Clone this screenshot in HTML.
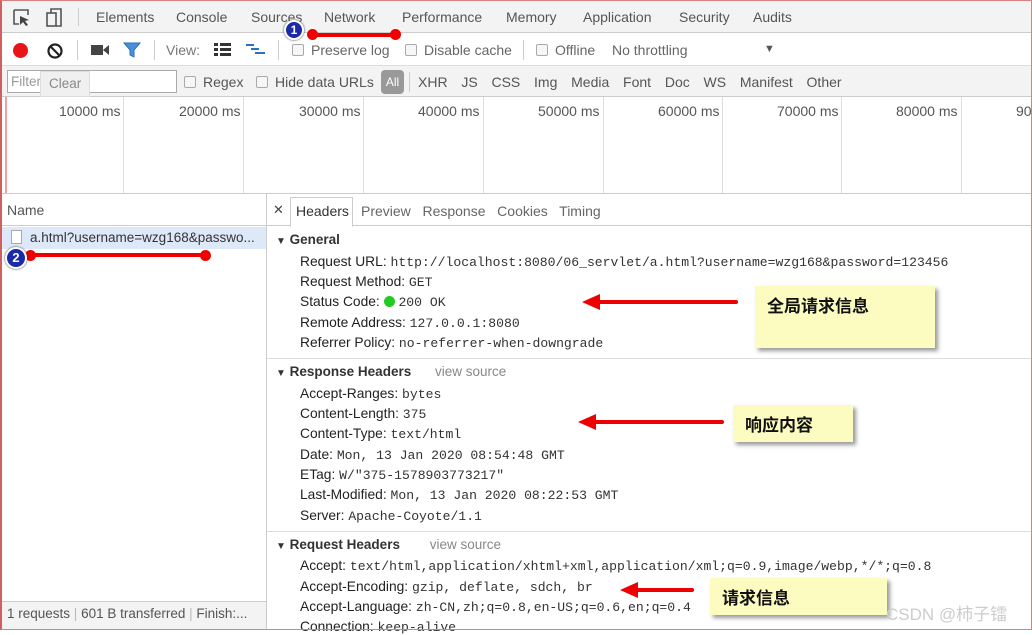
<!DOCTYPE html>
<html><head><meta charset="utf-8"><style>
*{margin:0;padding:0;box-sizing:border-box}
body{width:1032px;height:630px;overflow:hidden;position:relative;background:#fff;font-family:"Liberation Sans","Noto Sans CJK SC",sans-serif;font-size:14px;color:#333}
.a{position:absolute;white-space:nowrap}
.g{color:#555}
.mono{font-family:"Liberation Mono",monospace;font-size:13.1px;color:#333}
.cb{display:inline-block;width:12px;height:12px;border:1px solid #aaa;border-radius:2px;background:#f6f6f6;vertical-align:-1px;margin-right:7px}
.vl{position:absolute;width:1px;background:#ccc}
.note{position:absolute;background:#fdfcc0;box-shadow:3px 3px 4px #999;font-size:17px;font-weight:bold;color:#111;padding:6px 12px;font-family:"Noto Sans CJK SC",sans-serif}
.arrow{position:absolute;height:4px;background:#e00;border-radius:2px}
.arrow:before{content:"";position:absolute;left:-16px;top:-6px;border-right:18px solid #e00;border-top:8px solid transparent;border-bottom:8px solid transparent}
.row{position:absolute;left:300px;font-size:13.8px;white-space:nowrap}
.row b{font-weight:normal;color:#222}
</style></head><body>
<div class="a" style="left:0;top:0;width:1032px;height:33px;background:#f3f3f3;border-bottom:1px solid #ccc"></div>
<div class="a" style="left:0;top:33px;width:1032px;height:33px;background:#fff;border-bottom:1px solid #ddd"></div>
<div class="a" style="left:0;top:66px;width:1032px;height:31px;background:#f3f3f3;border-bottom:1px solid #ccc"></div>
<svg class="a" style="left:12px;top:8px" width="58" height="20"><path d="M2 2h14v5M2 2v14h5" fill="none" stroke="#555" stroke-width="1.6"/><path d="M8 8l9 4-4 1 3 4-2 1-3-4-3 3z" fill="#444"/><rect x="35" y="5" width="9" height="13" fill="none" stroke="#555" stroke-width="1.6"/><path d="M39 5V1h10v17h-5" fill="none" stroke="#555" stroke-width="1.6"/></svg>
<div class="vl" style="left:78px;top:8px;height:18px"></div>
<div class="a g" style="left:96px;top:9px">Elements</div>
<div class="a g" style="left:176px;top:9px">Console</div>
<div class="a g" style="left:251px;top:9px">Sources</div>
<div class="a g" style="left:324px;top:9px">Network</div>
<div class="a g" style="left:402px;top:9px">Performance</div>
<div class="a g" style="left:506px;top:9px">Memory</div>
<div class="a g" style="left:583px;top:9px">Application</div>
<div class="a g" style="left:679px;top:9px">Security</div>
<div class="a g" style="left:753px;top:9px">Audits</div>
<div class="a" style="left:13px;top:43px;width:15px;height:15px;border-radius:50%;background:#e8141a"></div>
<svg class="a" style="left:46px;top:42px" width="18" height="18"><circle cx="9" cy="9" r="6.5" fill="none" stroke="#222" stroke-width="2.2"/><path d="M4.5 4.5l9 9" stroke="#222" stroke-width="2.2"/></svg>
<div class="vl" style="left:77px;top:40px;height:20px"></div>
<svg class="a" style="left:91px;top:44px" width="18" height="12"><rect x="0" y="1" width="12" height="10" fill="#444"/><path d="M12 6l6-5v10z" fill="#444"/></svg>
<svg class="a" style="left:123px;top:42px" width="18" height="16"><path d="M1 1h16l-6 7v7l-4-2V8z" fill="#4a90d9" stroke="#2a6fc0"/></svg>
<div class="vl" style="left:154px;top:40px;height:20px"></div>
<div class="a g" style="left:166px;top:42px;color:#777">View:</div>
<svg class="a" style="left:214px;top:43px" width="18" height="13"><rect x="0" y="0" width="4" height="3" fill="#333"/><rect x="6" y="0" width="11" height="3" fill="#333"/><rect x="0" y="5" width="4" height="3" fill="#333"/><rect x="6" y="5" width="11" height="3" fill="#333"/><rect x="0" y="10" width="4" height="3" fill="#333"/><rect x="6" y="10" width="11" height="3" fill="#333"/></svg>
<svg class="a" style="left:246px;top:44px" width="20" height="12"><rect x="0" y="0" width="8" height="2" fill="#2a70c8"/><rect x="5" y="4" width="8" height="2" fill="#2a70c8"/><rect x="9" y="8" width="10" height="2" fill="#2a70c8"/></svg>
<div class="vl" style="left:278px;top:40px;height:20px"></div>
<div class="a g" style="left:292px;top:42px;color:#666"><span class="cb"></span>Preserve log</div>
<div class="a g" style="left:405px;top:42px;color:#666"><span class="cb"></span>Disable cache</div>
<div class="vl" style="left:523px;top:40px;height:20px"></div>
<div class="a g" style="left:536px;top:42px;color:#666"><span class="cb"></span>Offline</div>
<div class="a g" style="left:612px;top:42px;color:#666">No throttling</div>
<div class="a" style="left:764px;top:43px;font-size:11px;color:#555">▼</div>
<div class="a" style="left:7px;top:70px;width:170px;height:23px;border:1px solid #aaa;background:#fff"></div>
<div class="a" style="left:11px;top:74px;color:#999;font-size:13.5px">Filter</div>
<div class="a" style="left:40px;top:71px;width:50px;height:26px;background:#f0f0f0;border:1px solid #ddd;color:#888;padding:4px 8px;font-size:13.5px">Clear</div>
<div class="a g" style="left:184px;top:74px"><span class="cb"></span>Regex</div>
<div class="a g" style="left:256px;top:74px"><span class="cb"></span>Hide data URLs</div>
<div class="a" style="left:381px;top:70px;width:23px;height:24px;background:#999;border-radius:4px;color:#fff;font-size:12px;text-align:center;line-height:24px">All</div>
<div class="vl" style="left:409px;top:72px;height:20px"></div>
<div class="a g" style="left:418px;top:74px;word-spacing:3px">XHR&nbsp; JS&nbsp; CSS&nbsp; Img&nbsp; Media&nbsp; Font&nbsp; Doc&nbsp; WS&nbsp; Manifest&nbsp; Other</div>
<div class="vl" style="left:123px;top:97px;height:96px;background:#ddd"></div>
<div class="vl" style="left:243px;top:97px;height:96px;background:#ddd"></div>
<div class="vl" style="left:363px;top:97px;height:96px;background:#ddd"></div>
<div class="vl" style="left:483px;top:97px;height:96px;background:#ddd"></div>
<div class="vl" style="left:603px;top:97px;height:96px;background:#ddd"></div>
<div class="vl" style="left:722px;top:97px;height:96px;background:#ddd"></div>
<div class="vl" style="left:841px;top:97px;height:96px;background:#ddd"></div>
<div class="vl" style="left:961px;top:97px;height:96px;background:#ddd"></div>
<div class="a" style="left:5px;top:97px;width:2px;height:96px;background:#f0a0a0"></div>
<div class="a g" style="left:59px;top:103px">10000 ms</div>
<div class="a g" style="left:179px;top:103px">20000 ms</div>
<div class="a g" style="left:299px;top:103px">30000 ms</div>
<div class="a g" style="left:418px;top:103px">40000 ms</div>
<div class="a g" style="left:538px;top:103px">50000 ms</div>
<div class="a g" style="left:658px;top:103px">60000 ms</div>
<div class="a g" style="left:777px;top:103px">70000 ms</div>
<div class="a g" style="left:896px;top:103px">80000 ms</div>
<div class="a g" style="left:1016px;top:103px">90</div>
<div class="a" style="left:0;top:193px;width:1032px;height:1px;background:#ccc"></div>
<div class="a" style="left:266px;top:194px;width:1px;height:436px;background:#ccc"></div>
<div class="a" style="left:0;top:194px;width:266px;height:32px;border-bottom:1px solid #ccc"></div>
<div class="a g" style="left:7px;top:202px">Name</div>
<div class="a" style="left:0;top:227px;width:266px;height:22px;background:#dde9f8"></div>
<div class="a" style="left:11px;top:230px;width:11px;height:14px;border:1px solid #aaa;background:#fff"></div>
<div class="a" style="left:30px;top:230px;font-size:13.5px;color:#333">a.html?username=wzg168&amp;passwo...</div>
<div class="a" style="left:0;top:601px;width:266px;height:29px;background:#f3f3f3;border-top:1px solid #ccc"></div>
<div class="a g" style="left:7px;top:606px;font-size:13.5px">1 requests <span style="color:#bbb">|</span> 601 B transferred <span style="color:#bbb">|</span> Finish:...</div>
<div class="a" style="left:267px;top:194px;width:765px;height:32px;border-bottom:1px solid #ccc"></div>
<div class="a" style="left:273px;top:202px;font-size:13px;color:#444">✕</div>
<div class="a" style="left:290px;top:197px;width:63px;height:30px;border:1px solid #ccc;border-bottom:1px solid #fff;background:#fff"></div>
<div class="a" style="left:296px;top:203px;color:#333">Headers</div>
<div class="a g" style="left:361px;top:203px;color:#666">Preview&nbsp;&nbsp; Response&nbsp;&nbsp; Cookies&nbsp;&nbsp; Timing</div>
<div class="a" style="left:276px;top:232px;font-weight:bold;font-size:13.5px;color:#333"><span style="font-size:10px">▼</span> General</div>
<div class="row" style="top:254px"><b>Request URL:</b> <span class="mono">http://localhost:8080/06_servlet/a.html?username=wzg168&amp;password=123456</span></div>
<div class="row" style="top:274px"><b>Request Method:</b> <span class="mono">GET</span></div>
<div class="row" style="top:294px"><b>Status Code:</b> <span style="display:inline-block;width:11px;height:11px;border-radius:50%;background:#2c2;vertical-align:-1px"></span> <span class="mono">200 OK</span></div>
<div class="row" style="top:315px"><b>Remote Address:</b> <span class="mono">127.0.0.1:8080</span></div>
<div class="row" style="top:335px"><b>Referrer Policy:</b> <span class="mono">no-referrer-when-downgrade</span></div>
<div class="a" style="left:267px;top:358px;width:765px;height:1px;background:#ddd"></div>
<div class="a" style="left:276px;top:364px;font-weight:bold;font-size:13.5px;color:#333"><span style="font-size:10px">▼</span> Response Headers <span style="font-weight:normal;color:#888;margin-left:20px">view source</span></div>
<div class="row" style="top:386px"><b>Accept-Ranges:</b> <span class="mono">bytes</span></div>
<div class="row" style="top:406px"><b>Content-Length:</b> <span class="mono">375</span></div>
<div class="row" style="top:426px"><b>Content-Type:</b> <span class="mono">text/html</span></div>
<div class="row" style="top:447px"><b>Date:</b> <span class="mono">Mon, 13 Jan 2020 08:54:48 GMT</span></div>
<div class="row" style="top:467px"><b>ETag:</b> <span class="mono">W/"375-1578903773217"</span></div>
<div class="row" style="top:487px"><b>Last-Modified:</b> <span class="mono">Mon, 13 Jan 2020 08:22:53 GMT</span></div>
<div class="row" style="top:508px"><b>Server:</b> <span class="mono">Apache-Coyote/1.1</span></div>
<div class="a" style="left:267px;top:531px;width:765px;height:1px;background:#ddd"></div>
<div class="a" style="left:276px;top:537px;font-weight:bold;font-size:13.5px;color:#333"><span style="font-size:10px">▼</span> Request Headers <span style="font-weight:normal;color:#888;margin-left:26px">view source</span></div>
<div class="row" style="top:558px"><b>Accept:</b> <span class="mono">text/html,application/xhtml+xml,application/xml;q=0.9,image/webp,*/*;q=0.8</span></div>
<div class="row" style="top:579px"><b>Accept-Encoding:</b> <span class="mono">gzip, deflate, sdch, br</span></div>
<div class="row" style="top:599px"><b>Accept-Language:</b> <span class="mono">zh-CN,zh;q=0.8,en-US;q=0.6,en;q=0.4</span></div>
<div class="row" style="top:619px"><b>Connection:</b> <span class="mono">keep-alive</span></div>
<div class="arrow" style="left:598px;top:300px;width:140px"></div>
<div class="note" style="left:755px;top:286px;width:180px;height:62px;padding:6px 12px">全局请求信息</div>
<div class="arrow" style="left:594px;top:420px;width:130px"></div>
<div class="note" style="left:733px;top:405px;width:120px;height:37px">响应内容</div>
<div class="arrow" style="left:636px;top:588px;width:58px"></div>
<div class="note" style="left:710px;top:578px;width:177px;height:37px">请求信息</div>
<div class="a" style="left:886px;top:600px;font-size:17px;color:#ccc">CSDN @柿子镭</div>
<div class="a" style="left:313px;top:33px;width:82px;height:4px;background:#e00"></div>
<div class="a" style="left:307px;top:29px;width:11px;height:11px;border-radius:50%;background:#e00"></div>
<div class="a" style="left:390px;top:29px;width:11px;height:11px;border-radius:50%;background:#e00"></div>
<div class="a" style="left:284px;top:20px;width:20px;height:20px;border-radius:50%;background:#1a2aa8;border:2px solid #fff;box-shadow:0 0 2px #333;color:#fff;font-weight:bold;font-size:12px;text-align:center;line-height:16px">1</div>
<div class="a" style="left:30px;top:253px;width:178px;height:4px;background:#e00"></div>
<div class="a" style="left:25px;top:250px;width:11px;height:11px;border-radius:50%;background:#e00"></div>
<div class="a" style="left:200px;top:250px;width:11px;height:11px;border-radius:50%;background:#e00"></div>
<div class="a" style="left:5px;top:247px;width:22px;height:22px;border-radius:50%;background:#1a2aa8;border:2px solid #fff;box-shadow:0 0 2px #333;color:#fff;font-weight:bold;font-size:13px;text-align:center;line-height:18px">2</div>
<div class="a" style="left:0;top:0;width:1032px;height:630px;border:1px solid #d98080;border-left:2px solid #d06060;pointer-events:none"></div>
</body></html>
